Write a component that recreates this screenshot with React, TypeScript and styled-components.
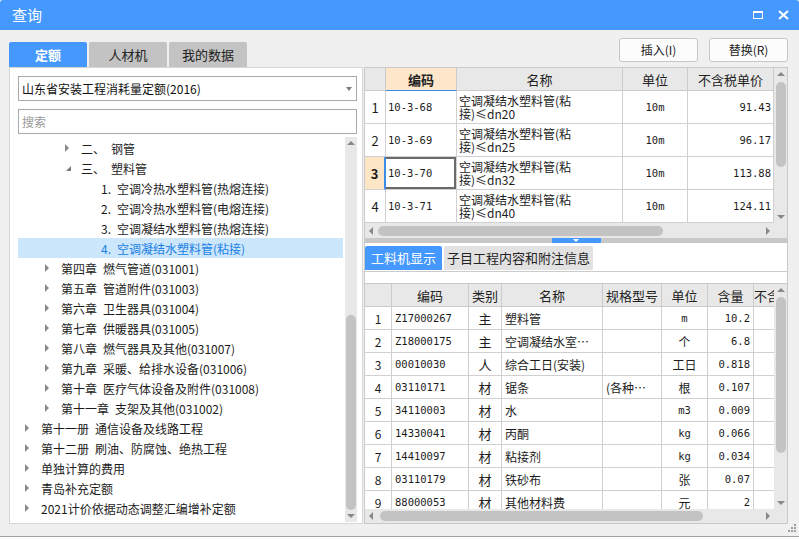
import React from 'react';
import styled, { createGlobalStyle, css } from 'styled-components';

const UI = `"Noto Sans CJK SC", "Noto Sans", sans-serif`;
const MONO = `"DejaVu Sans Mono", "Liberation Mono", "Noto Sans CJK SC", monospace`;
const BLUE = '#4599fe';
const GRID = '#d0d0d0';

const GlobalStyle = createGlobalStyle`
  html, body { margin: 0; padding: 0; background: #ffffff; }
  body { font-family: ${UI}; font-size: 12px; color: #1c1c1c; }
  #root { width: 799px; height: 540px; overflow: hidden; }
  *, *::before, *::after { box-sizing: border-box; }
`;

const Window = styled.div`
  position: relative;
  width: 799px;
  height: 537px;
  background: #f0f0f0;
  border-bottom: 1px solid #a3a3a3;
  display: flex;
  flex-direction: column;
  overflow: hidden;
`;

const TitleBar = styled.div`
  flex: none;
  height: 30px;
  background: ${BLUE};
  color: #fff;
  display: flex;
  align-items: center;
  justify-content: space-between;
  padding: 0 10px 0 12px;
  border-radius: 3px 3px 0 0;
`;

const Title = styled.div`
  font-size: 15px;
  line-height: 30px;
`;

const TitleIcons = styled.div`
  display: flex;
  align-items: center;
  gap: 15px;
`;

const MaxIcon = styled.div`
  width: 10px;
  height: 8px;
  border: 1px solid #fff;
  border-top-width: 2px;
  margin-top: -1px;
`;

const Body = styled.div`
  flex: 1;
  min-height: 0;
  display: flex;
  flex-direction: column;
  padding: 8px 11px 0 9px;
`;

const TopBar = styled.div`
  flex: none;
  height: 29px;
  display: flex;
  justify-content: space-between;
  align-items: flex-start;
`;

const TabRow = styled.div`
  align-self: flex-end;
  display: flex;
  gap: 2px;
`;

const MainTab = styled.div<{ $active?: boolean; $w: number }>`
  width: ${p => p.$w}px;
  height: 25px;
  line-height: 25px;
  text-align: center;
  font-size: 13px;
  border-radius: 2px 2px 0 0;
  background: ${p => (p.$active ? BLUE : '#c3c3c3')};
  color: ${p => (p.$active ? '#fff' : '#222')};
  font-weight: ${p => (p.$active ? 'bold' : 'normal')};
`;

const ActionRow = styled.div`
  display: flex;
  gap: 11px;
`;

const ActionButton = styled.div`
  width: 79px;
  height: 24px;
  line-height: 22px;
  text-align: center;
  font-size: 12px;
  color: #222;
  background: #fcfcfc;
  border: 1px solid #c6c6c6;
  border-radius: 3px;
`;

const Panels = styled.div`
  flex: none;
  height: 457px;
  display: flex;
  gap: 1px;
`;

const LeftPanel = styled.div`
  width: 354px;
  flex: none;
  background: #fff;
  border: 1px solid #d6d6d6;
  display: flex;
  flex-direction: column;
  padding: 8px 5px 1px 8px;
`;

const Select = styled.div`
  flex: none;
  height: 25px;
  border: 1px solid #a9a9a9;
  display: flex;
  align-items: center;
  justify-content: space-between;
  padding: 0 4px 0 3px;
  font-size: 12px;
  color: #111;
`;

const Caret = styled.span`
  width: 0;
  height: 0;
  border-left: 3.5px solid transparent;
  border-right: 3.5px solid transparent;
  border-top: 4px solid #7c7c7c;
`;

const SearchBox = styled.input`
  flex: none;
  margin-top: 8px;
  height: 25px;
  border: 1px solid #a9a9a9;
  padding: 0 3px;
  font-family: ${UI};
  font-size: 12px;
  color: #222;
  outline: none;
  &::placeholder { color: #9a9a9a; }
`;

const TreeArea = styled.div`
  flex: 1;
  min-height: 0;
  margin-top: 3px;
  display: flex;
  gap: 2px;
`;

const TreeList = styled.div`
  flex: 1;
  min-width: 0;
  overflow: hidden;
  padding-top: 1px;
`;

const TreeRow = styled.div<{ $level: number; $selected?: boolean }>`
  height: 20px;
  display: flex;
  align-items: center;
  padding-left: ${p => 7 + p.$level * 20}px;
  white-space: nowrap;
  font-size: 12px;
  background: ${p => (p.$selected ? '#cce6fc' : 'transparent')};
  color: ${p => (p.$selected ? '#1a7fe4' : '#1c1c1c')};
`;

const ArrowBox = styled.span`
  flex: none;
  width: 16px;
  height: 20px;
  display: flex;
  align-items: center;
`;

const Collapsed = styled.span`
  width: 0;
  height: 0;
  border-top: 4px solid transparent;
  border-bottom: 4px solid transparent;
  border-left: 4px solid #8a8a8a;
`;

const Expanded = styled.span`
  width: 0;
  height: 0;
  margin-left: 1px;
  margin-top: 1px;
  border-top: 5px solid transparent;
  border-right: 5px solid #7a7a7a;
`;

const Prefix = styled.span`
  margin-right: 6px;
`;

const TreeScroll = styled.div`
  flex: none;
  width: 12px;
`;

/* ---------- scrollbars ---------- */
type Orient = 'v' | 'h';

const Bar = styled.div<{ $o: Orient }>`
  width: 100%;
  height: 100%;
  display: flex;
  flex-direction: ${p => (p.$o === 'v' ? 'column' : 'row')};
  align-items: center;
  background: #e8e8e8;
`;

const BarArrow = styled.div`
  flex: none;
  width: 12px;
  height: 12px;
  display: flex;
  align-items: center;
  justify-content: center;
`;

const Tri = styled.span<{ $dir: 'up' | 'down' | 'left' | 'right' }>`
  width: 0;
  height: 0;
  ${p =>
    p.$dir === 'up'
      ? css`border-left: 4px solid transparent; border-right: 4px solid transparent; border-bottom: 4px solid #888;`
      : p.$dir === 'down'
      ? css`border-left: 4px solid transparent; border-right: 4px solid transparent; border-top: 4px solid #888;`
      : p.$dir === 'left'
      ? css`border-top: 4px solid transparent; border-bottom: 4px solid transparent; border-right: 4px solid #888;`
      : css`border-top: 4px solid transparent; border-bottom: 4px solid transparent; border-left: 4px solid #888;`}
`;

const BarTrack = styled.div<{ $o: Orient }>`
  flex: 1;
  align-self: stretch;
  min-width: 0;
  min-height: 0;
  display: flex;
  flex-direction: ${p => (p.$o === 'v' ? 'column' : 'row')};
  align-items: center;
`;

const BarGap = styled.div<{ $o: Orient; $len: number }>`
  flex: none;
  ${p => (p.$o === 'v' ? `height: ${p.$len}px;` : `width: ${p.$len}px;`)}
`;

const BarThumb = styled.div<{ $o: Orient; $len: number }>`
  flex: none;
  background: #c3c3c3;
  border-radius: 5px;
  ${p => (p.$o === 'v' ? `width: 10px; height: ${p.$len}px;` : `height: 10px; width: ${p.$len}px;`)}
`;

function Scrollbar({ o, before, size }: { o: Orient; before: number; size: number }) {
  return (
    <Bar $o={o}>
      <BarArrow>
        <Tri $dir={o === 'v' ? 'up' : 'left'} />
      </BarArrow>
      <BarTrack $o={o}>
        <BarGap $o={o} $len={before} />
        <BarThumb $o={o} $len={size} />
      </BarTrack>
      <BarArrow>
        <Tri $dir={o === 'v' ? 'down' : 'right'} />
      </BarArrow>
    </Bar>
  );
}

/* ---------- right side ---------- */
const RightPanel = styled.div`
  flex: 1;
  min-width: 0;
  background: #fff;
  border: 1px solid #c9c9c9;
  display: flex;
  flex-direction: column;
`;

const GridFrame = styled.div<{ $rows: string; $top?: boolean }>`
  flex: none;
  display: grid;
  grid-template-columns: 1fr 13px;
  grid-template-rows: ${p => p.$rows};
  ${p => p.$top && css`border-top: 1px solid #c9c9c9;`}
`;

const Viewport = styled.div`
  overflow: hidden;
  min-width: 0;
  background: #fff;
`;

const Corner = styled.div`
  background: #e8e8e8;
`;

const GridRow = styled.div<{ $cols: string; $h: number }>`
  display: grid;
  grid-template-columns: ${p => p.$cols};
  height: ${p => p.$h}px;
  width: max-content;
`;

type Align = 'l' | 'c' | 'r';

const HeadCell = styled.div<{ $hl?: boolean }>`
  display: flex;
  align-items: center;
  justify-content: center;
  overflow: hidden;
  white-space: nowrap;
  font-size: 13px;
  color: #222;
  background: ${p => (p.$hl ? '#fde6c9' : '#e8e8e8')};
  border-right: 1px solid #cbcbcb;
  border-bottom: 1px solid ${p => (p.$hl ? '#3c8de6' : '#cbcbcb')};
  font-weight: ${p => (p.$hl ? 'bold' : 'normal')};
`;

const Cell = styled.div<{ $align?: Align; $mono?: boolean; $num?: boolean; $active?: boolean; $focus?: boolean }>`
  display: flex;
  align-items: center;
  justify-content: ${p => (p.$align === 'c' ? 'center' : p.$align === 'r' ? 'flex-end' : 'flex-start')};
  padding: 0 3px;
  overflow: hidden;
  white-space: nowrap;
  font-family: ${p => (p.$mono ? MONO : UI)};
  font-size: ${p => (p.$mono ? '10.5px' : '12px')};
  color: #1c1c1c;
  border-right: 1px solid ${GRID};
  border-bottom: 1px solid ${GRID};
  ${p => p.$num && css`font-size: 13px; font-family: ${UI};`}
  ${p => p.$active && css`background: #fde6c6; font-weight: bold; border-right: 2px solid #3c8de6;`}
  ${p => p.$focus && css`box-shadow: inset 0 2px #6a6a6a, inset -2px 0 #6a6a6a, inset 0 -2px #6a6a6a;`}
`;

const NameLines = styled.div`
  font-size: 12px;
  line-height: 13px;
  white-space: nowrap;
`;

const Splitter = styled.div`
  flex: none;
  height: 5px;
  background: #c8c8c8;
  display: flex;
  justify-content: center;
`;

const SplitHandle = styled.div`
  width: 49px;
  height: 5px;
  background: ${BLUE};
  display: flex;
  justify-content: center;
  align-items: center;
`;

const SplitArrow = styled.span`
  width: 0;
  height: 0;
  border-left: 3px solid transparent;
  border-right: 3px solid transparent;
  border-top: 3px solid #fff;
`;

const SubTabBar = styled.div`
  flex: none;
  height: 29px;
  padding-top: 3px;
  display: flex;
  align-items: flex-start;
  gap: 2px;
  border-bottom: 1px solid #cbcbcb;
`;

const SubTab = styled.div<{ $active?: boolean; $w: number }>`
  width: ${p => p.$w}px;
  height: 24px;
  line-height: 24px;
  text-align: center;
  font-size: 13px;
  border-radius: 2px 2px 0 0;
  background: ${p => (p.$active ? BLUE : '#e2e2e2')};
  color: ${p => (p.$active ? '#fff' : '#222')};
`;

const SubGap = styled.div`
  flex: none;
  height: 11px;
`;

const Grip = styled.svg`
  position: absolute;
  right: 3px;
  bottom: 4px;
`;

/* ---------- data ---------- */
type TreeItem = { level: number; arrow: 'right' | 'down' | 'none'; prefix?: string; text: string; selected?: boolean };

const tree: TreeItem[] = [
  { level: 2, arrow: 'right', prefix: '二、', text: '钢管' },
  { level: 2, arrow: 'down', prefix: '三、', text: '塑料管' },
  { level: 3, arrow: 'none', prefix: '1.', text: '空调冷热水塑料管(热熔连接)' },
  { level: 3, arrow: 'none', prefix: '2.', text: '空调冷热水塑料管(电熔连接)' },
  { level: 3, arrow: 'none', prefix: '3.', text: '空调凝结水塑料管(热熔连接)' },
  { level: 3, arrow: 'none', prefix: '4.', text: '空调凝结水塑料管(粘接)', selected: true },
  { level: 1, arrow: 'right', prefix: '第四章', text: '燃气管道(031001)' },
  { level: 1, arrow: 'right', prefix: '第五章', text: '管道附件(031003)' },
  { level: 1, arrow: 'right', prefix: '第六章', text: '卫生器具(031004)' },
  { level: 1, arrow: 'right', prefix: '第七章', text: '供暖器具(031005)' },
  { level: 1, arrow: 'right', prefix: '第八章', text: '燃气器具及其他(031007)' },
  { level: 1, arrow: 'right', prefix: '第九章', text: '采暖、给排水设备(031006)' },
  { level: 1, arrow: 'right', prefix: '第十章', text: '医疗气体设备及附件(031008)' },
  { level: 1, arrow: 'right', prefix: '第十一章', text: '支架及其他(031002)' },
  { level: 0, arrow: 'right', prefix: '第十一册', text: '通信设备及线路工程' },
  { level: 0, arrow: 'right', prefix: '第十二册', text: '刷油、防腐蚀、绝热工程' },
  { level: 0, arrow: 'right', text: '单独计算的费用' },
  { level: 0, arrow: 'right', text: '青岛补充定额' },
  { level: 0, arrow: 'right', text: '2021计价依据动态调整汇编增补定额' },
];

const quotas = [
  { n: 1, code: '10-3-68', l1: '空调凝结水塑料管(粘', l2: '接)≤dn20', unit: '10m', price: '91.43' },
  { n: 2, code: '10-3-69', l1: '空调凝结水塑料管(粘', l2: '接)≤dn25', unit: '10m', price: '96.17' },
  { n: 3, code: '10-3-70', l1: '空调凝结水塑料管(粘', l2: '接)≤dn32', unit: '10m', price: '113.88', active: true },
  { n: 4, code: '10-3-71', l1: '空调凝结水塑料管(粘', l2: '接)≤dn40', unit: '10m', price: '124.11' },
];

const materials = [
  { n: 1, code: 'Z17000267', kind: '主', name: '塑料管', spec: '', unit: 'm', qty: '10.2' },
  { n: 2, code: 'Z18000175', kind: '主', name: '空调凝结水室…', spec: '', unit: '个', qty: '6.8' },
  { n: 3, code: '00010030', kind: '人', name: '综合工日(安装)', spec: '', unit: '工日', qty: '0.818' },
  { n: 4, code: '03110171', kind: '材', name: '锯条', spec: '(各种…', unit: '根', qty: '0.107' },
  { n: 5, code: '34110003', kind: '材', name: '水', spec: '', unit: 'm3', qty: '0.009' },
  { n: 6, code: '14330041', kind: '材', name: '丙酮', spec: '', unit: 'kg', qty: '0.066' },
  { n: 7, code: '14410097', kind: '材', name: '粘接剂', spec: '', unit: 'kg', qty: '0.034' },
  { n: 8, code: '03110179', kind: '材', name: '铁砂布', spec: '', unit: '张', qty: '0.07' },
  { n: 9, code: '88000053', kind: '材', name: '其他材料费', spec: '', unit: '元', qty: '2' },
];

const TOP_COLS = '21px 71px 166px 65px 86px';
const BOT_COLS = '27px 77px 33px 101px 59px 46px 46px 66px';
const isAscii = (s: string) => /^[\x00-\x7f]+$/.test(s);

export default function App() {
  return (
    <>
      <GlobalStyle />
      <Window>
        <TitleBar>
          <Title>查询</Title>
          <TitleIcons>
            <MaxIcon />
            <svg width="11" height="10" viewBox="0 0 11 10">
              <path d="M1 1 L10 9 M10 1 L1 9" stroke="#fff" strokeWidth="2" fill="none" />
            </svg>
          </TitleIcons>
        </TitleBar>
        <Body>
          <TopBar>
            <TabRow>
              <MainTab $active $w={78}>定额</MainTab>
              <MainTab $w={78}>人材机</MainTab>
              <MainTab $w={78}>我的数据</MainTab>
            </TabRow>
            <ActionRow>
              <ActionButton>插入(I)</ActionButton>
              <ActionButton>替换(R)</ActionButton>
            </ActionRow>
          </TopBar>
          <Panels>
            <LeftPanel>
              <Select>
                <span>山东省安装工程消耗量定额(2016)</span>
                <Caret />
              </Select>
              <SearchBox placeholder="搜索" />
              <TreeArea>
                <TreeList>
                  {tree.map((t, i) => (
                    <TreeRow key={i} $level={t.level} $selected={t.selected}>
                      <ArrowBox>
                        {t.arrow === 'right' && <Collapsed />}
                        {t.arrow === 'down' && <Expanded />}
                      </ArrowBox>
                      {t.prefix && <Prefix>{t.prefix}</Prefix>}
                      <span>{t.text}</span>
                    </TreeRow>
                  ))}
                </TreeList>
                <TreeScroll>
                  <Scrollbar o="v" before={166} size={195} />
                </TreeScroll>
              </TreeArea>
            </LeftPanel>
            <RightPanel>
              <GridFrame $rows="155px 15px">
                <Viewport>
                  <GridRow $cols={TOP_COLS} $h={23}>
                    <HeadCell />
                    <HeadCell $hl>编码</HeadCell>
                    <HeadCell>名称</HeadCell>
                    <HeadCell>单位</HeadCell>
                    <HeadCell>不含税单价</HeadCell>
                  </GridRow>
                  {quotas.map(q => (
                    <GridRow key={q.n} $cols={TOP_COLS} $h={33}>
                      <Cell $align="c" $num $active={q.active}>{q.n}</Cell>
                      <Cell $mono $focus={q.active} style={{ paddingLeft: 2 }}>{q.code}</Cell>
                      <Cell style={{ paddingLeft: 2 }}>
                        <NameLines>
                          {q.l1}
                          <br />
                          {q.l2}
                        </NameLines>
                      </Cell>
                      <Cell $align="c" $mono>{q.unit}</Cell>
                      <Cell $align="r" $mono style={{ paddingRight: 2 }}>{q.price}</Cell>
                    </GridRow>
                  ))}
                </Viewport>
                <Scrollbar o="v" before={2} size={85} />
                <Scrollbar o="h" before={1} size={285} />
                <Corner />
              </GridFrame>
              <Splitter>
                <SplitHandle>
                  <SplitArrow />
                </SplitHandle>
              </Splitter>
              <SubTabBar>
                <SubTab $active $w={77}>工料机显示</SubTab>
                <SubTab $w={149}>子目工程内容和附注信息</SubTab>
              </SubTabBar>
              <SubGap />
              <GridFrame $rows="225px 14px" $top>
                <Viewport>
                  <GridRow $cols={BOT_COLS} $h={23}>
                    <HeadCell />
                    <HeadCell>编码</HeadCell>
                    <HeadCell>类别</HeadCell>
                    <HeadCell>名称</HeadCell>
                    <HeadCell>规格型号</HeadCell>
                    <HeadCell>单位</HeadCell>
                    <HeadCell>含量</HeadCell>
                    <HeadCell>不含税单价</HeadCell>
                  </GridRow>
                  {materials.map(m => (
                    <GridRow key={m.n} $cols={BOT_COLS} $h={23}>
                      <Cell $align="c">{m.n}</Cell>
                      <Cell $mono>{m.code}</Cell>
                      <Cell $align="c" style={{ fontSize: 13 }}>{m.kind}</Cell>
                      <Cell>{m.name}</Cell>
                      <Cell>{m.spec}</Cell>
                      <Cell $align="c" $mono={isAscii(m.unit)}>{m.unit}</Cell>
                      <Cell $align="r" $mono>{m.qty}</Cell>
                      <Cell />
                    </GridRow>
                  ))}
                </Viewport>
                <Scrollbar o="v" before={1} size={156} />
                <Scrollbar o="h" before={3} size={323} />
                <Corner />
              </GridFrame>
            </RightPanel>
          </Panels>
        </Body>
        <Grip width="8" height="8" viewBox="0 0 8 8">
          <g fill="#a0a0a0">
            <rect x="6" y="0" width="2" height="2" />
            <rect x="6" y="3" width="2" height="2" />
            <rect x="3" y="3" width="2" height="2" />
            <rect x="6" y="6" width="2" height="2" />
            <rect x="3" y="6" width="2" height="2" />
            <rect x="0" y="6" width="2" height="2" />
          </g>
        </Grip>
      </Window>
    </>
  );
}
